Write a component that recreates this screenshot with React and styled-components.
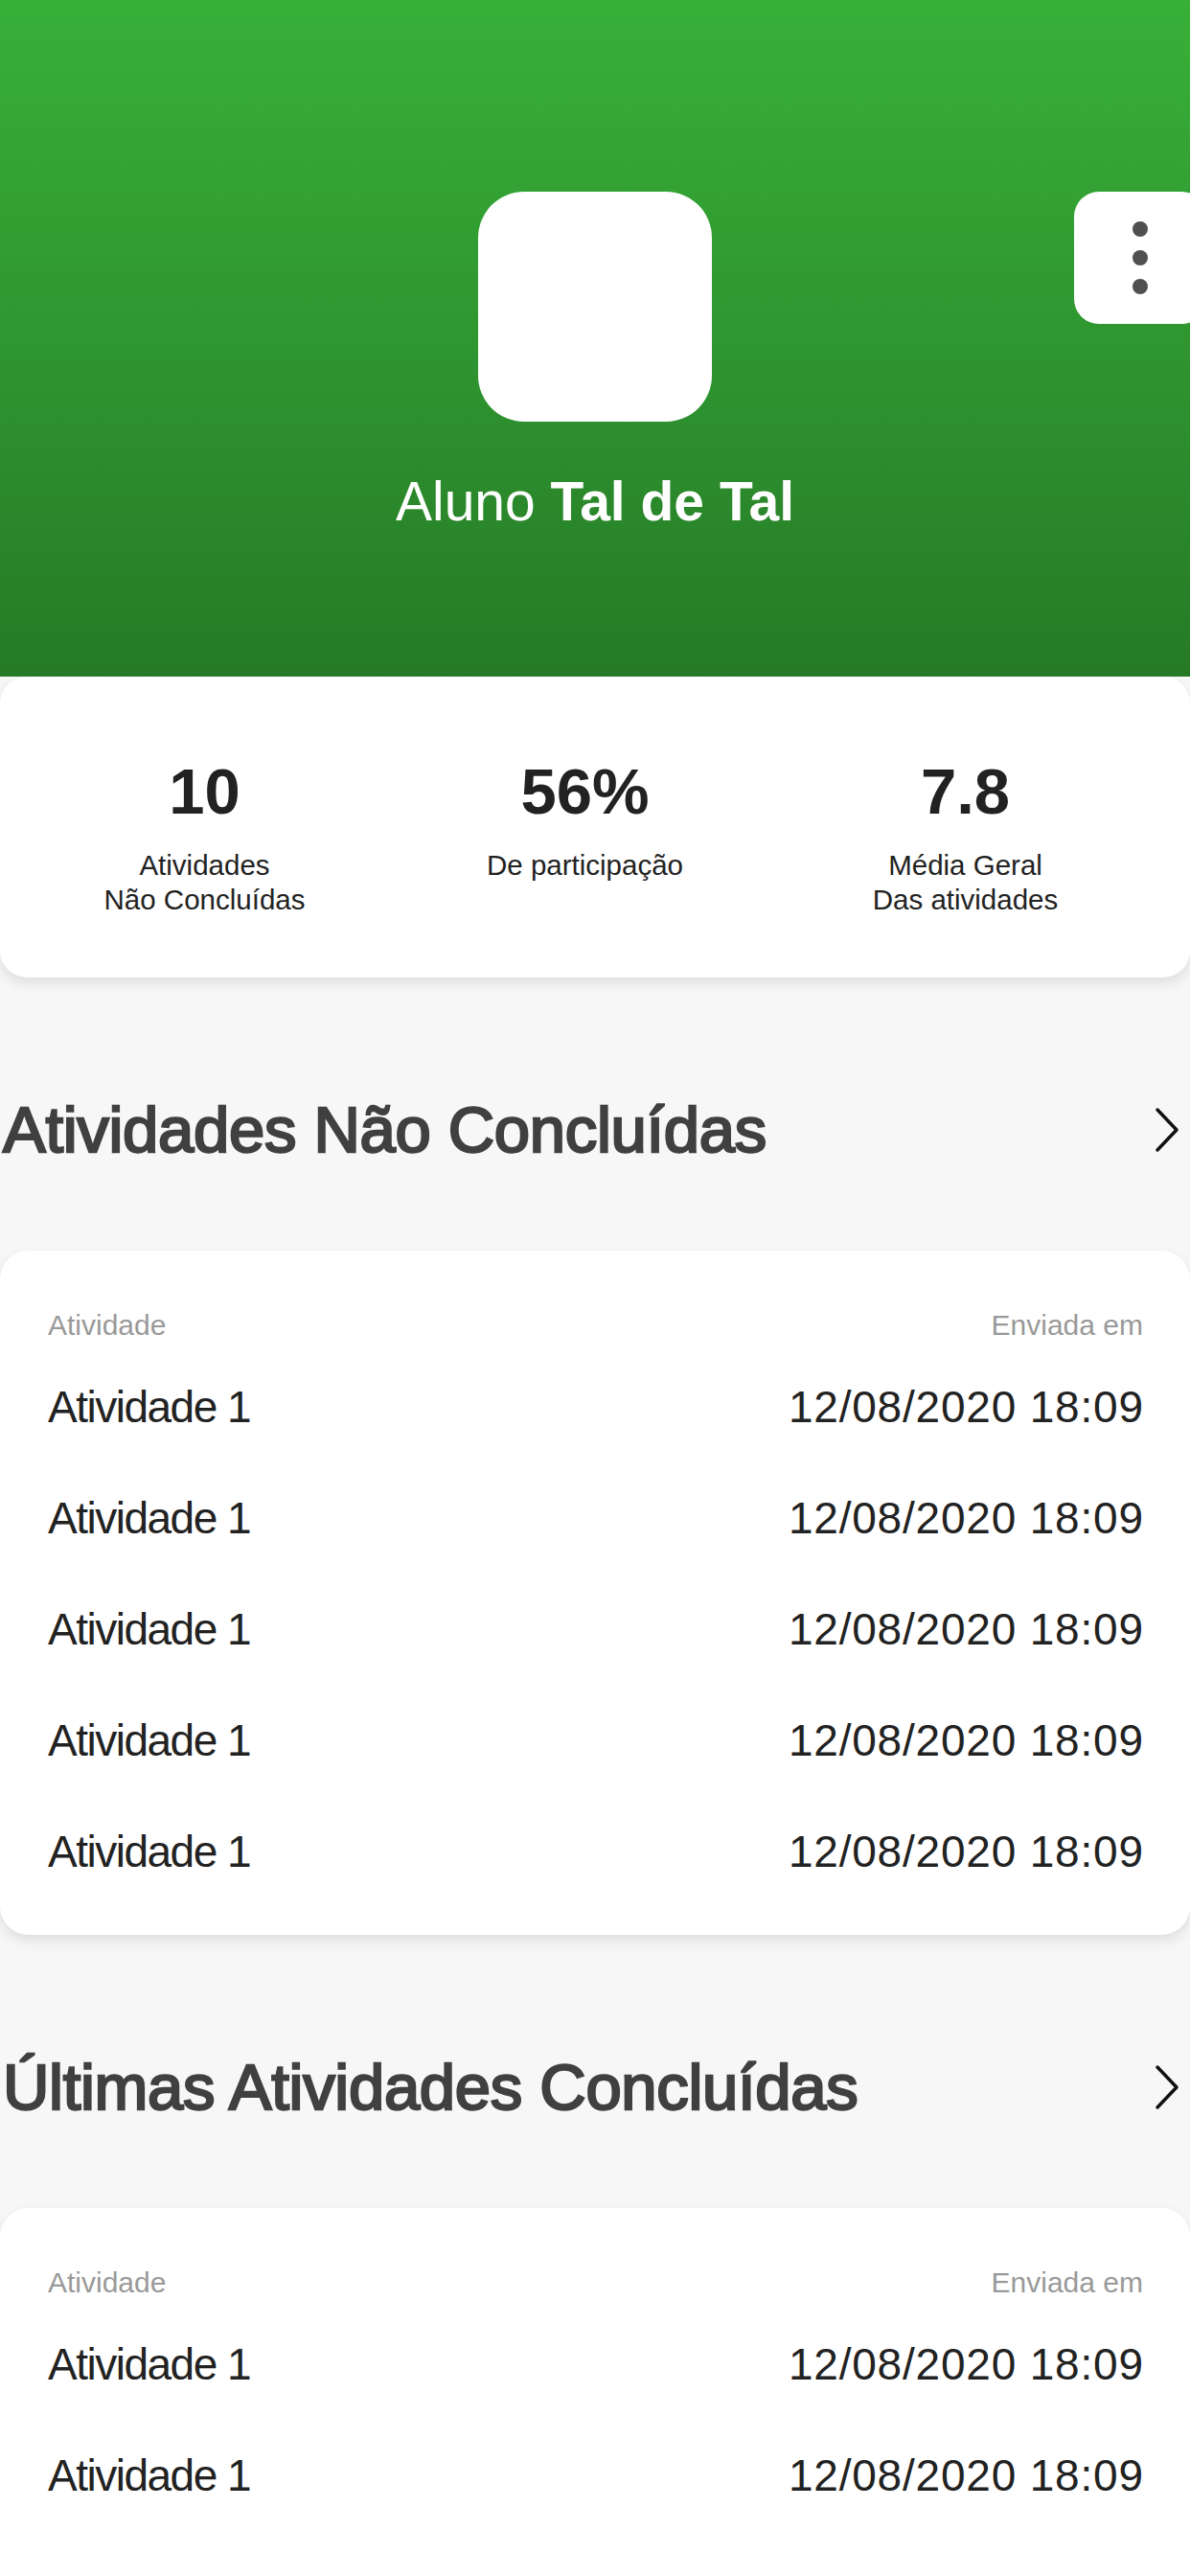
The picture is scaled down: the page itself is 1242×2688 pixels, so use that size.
import React from 'react';
import styled, { createGlobalStyle } from 'styled-components';

const GlobalStyle = createGlobalStyle`
  body {
    margin: 0;
    background-color: #f7f7f7;
    font-family: "Liberation Sans", Arial, sans-serif;
  }
`;

const Page = styled.div`
  width: 1242px;
  min-height: 2688px;
  background-color: #f7f7f7;
  overflow: hidden;
`;

const Header = styled.header`
  position: relative;
  box-sizing: border-box;
  height: 706px;
  padding-top: 200px;
  display: flex;
  flex-direction: column;
  align-items: center;
  background: linear-gradient(180deg, #38b038 0%, #2f9630 50%, #267a26 100%);
  overflow: hidden;
`;

const Avatar = styled.div`
  width: 244px;
  height: 240px;
  border-radius: 48px;
  background-color: #fff;
`;

const MenuButton = styled.button`
  position: absolute;
  top: 200px;
  left: 1121px;
  width: 138px;
  height: 138px;
  padding: 0;
  border: none;
  border-radius: 26px;
  background-color: #fff;
  display: flex;
  flex-direction: column;
  align-items: center;
  justify-content: center;
  gap: 14px;
  cursor: pointer;
`;

const Dot = styled.span`
  width: 16px;
  height: 16px;
  border-radius: 50%;
  background-color: #505050;
`;

const Name = styled.h1`
  margin: 50px 0 0;
  font-size: 57px;
  line-height: 66px;
  font-weight: 400;
  color: #fff;

  strong {
    font-weight: 700;
  }
`;

const StatsCard = styled.section`
  box-sizing: border-box;
  height: 314px;
  padding: 81px 36px 0 15px;
  display: grid;
  grid-template-columns: repeat(3, 1fr);
  align-items: start;
  background-color: #fff;
  border-radius: 28px;
  box-shadow: 0 6px 14px rgba(0, 0, 0, 0.1);
`;

const Stat = styled.div`
  display: flex;
  flex-direction: column;
  align-items: center;
  text-align: center;
`;

const StatValue = styled.div`
  font-size: 67px;
  line-height: 78px;
  font-weight: 700;
  color: #222;
`;

const StatLabel = styled.div`
  margin-top: 20px;
  font-size: 29.5px;
  line-height: 36px;
  color: #222;
`;

const SectionHeader = styled.div`
  height: 80px;
  margin: 119px 0 86px;
  padding: 0 10px 0 3px;
  display: flex;
  align-items: center;
  justify-content: space-between;
`;

const SectionTitle = styled.h2`
  margin: 0;
  font-size: 67px;
  line-height: 80px;
  font-weight: 400;
  letter-spacing: -0.3px;
  color: #404040;
  -webkit-text-stroke: 2.4px #404040;
`;

const ListCard = styled.section`
  padding: 53px 49px ${(p) => p.$bottom}px 50px;
  background-color: #fff;
  border-radius: 30px;
  box-shadow: 0 6px 14px rgba(0, 0, 0, 0.1);
`;

const ListHeader = styled.div`
  height: 52px;
  display: flex;
  justify-content: space-between;
  font-size: 30px;
  line-height: 50px;
  color: #999;
`;

const ListRow = styled.div`
  height: 116px;
  display: flex;
  justify-content: space-between;
  font-size: 46px;
  line-height: 116px;
  color: #222;
`;

const RowName = styled.span`
  letter-spacing: -1.5px;
`;

const RowDate = styled.span`
  letter-spacing: 0.8px;
  margin-right: -0.8px;
`;

const Chevron = () => (
  <svg width="28" height="48" viewBox="0 0 28 48" fill="none">
    <path d="M4 3 L24 24 L4 45" stroke="#111" strokeWidth="3.5" strokeLinecap="round" strokeLinejoin="round" />
  </svg>
);

const stats = [
  { value: '10', label: ['Atividades', 'Não Concluídas'] },
  { value: '56%', label: ['De participação'] },
  { value: '7.8', label: ['Média Geral', 'Das atividades'] },
];

const ActivityList = ({ rows, bottom }) => (
  <ListCard $bottom={bottom}>
    <ListHeader>
      <span>Atividade</span>
      <span>Enviada em</span>
    </ListHeader>
    {rows.map((row, i) => (
      <ListRow key={i}>
        <RowName>{row.name}</RowName>
        <RowDate>{row.date}</RowDate>
      </ListRow>
    ))}
  </ListCard>
);

const makeRows = (n) =>
  Array.from({ length: n }, () => ({ name: 'Atividade 1', date: '12/08/2020 18:09' }));

const App = () => (
  <Page>
    <GlobalStyle />
    <Header>
      <Avatar />
      <Name>
        Aluno <strong>Tal de Tal</strong>
      </Name>
      <MenuButton aria-label="menu">
        <Dot />
        <Dot />
        <Dot />
      </MenuButton>
    </Header>

    <StatsCard>
      {stats.map((s) => (
        <Stat key={s.value}>
          <StatValue>{s.value}</StatValue>
          <StatLabel>
            {s.label.map((l) => (
              <div key={l}>{l}</div>
            ))}
          </StatLabel>
        </Stat>
      ))}
    </StatsCard>

    <SectionHeader>
      <SectionTitle>Atividades Não Concluídas</SectionTitle>
      <Chevron />
    </SectionHeader>
    <ActivityList rows={makeRows(5)} bottom={29} />

    <SectionHeader>
      <SectionTitle>Últimas Atividades Concluídas</SectionTitle>
      <Chevron />
    </SectionHeader>
    <ActivityList rows={makeRows(2)} bottom={120} />
  </Page>
);

export default App;
